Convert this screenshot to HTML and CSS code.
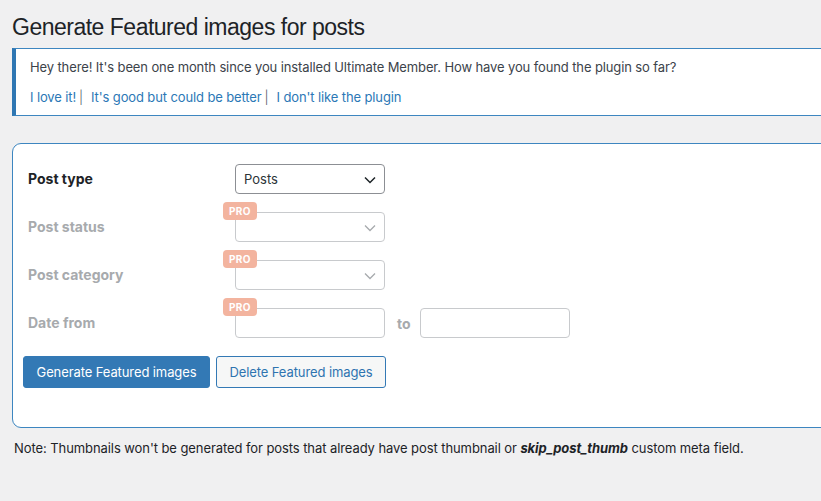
FILE: index.html
```html
<!DOCTYPE html>
<html>
<head>
<meta charset="utf-8">
<link rel="stylesheet" href="styles.css">
</head>
<body>
<div class="wrap">
  <h1 class="title">Generate Featured images for posts</h1>
  <div class="notice">
    <p>Hey there! It's been one month since you installed Ultimate Member. How have you found the plugin so far?</p>
    <p class="links"><a href="#">I love it!</a><span class="sep">|</span><a href="#">It's good but could be better</a><span class="sep">|</span><a href="#">I don't like the plugin</a></p>
  </div>
  <div class="card">
    <div class="row">
      <div class="label">Post type</div>
      <div class="field">
        <div class="select">Posts<svg class="chev" viewBox="0 0 12 8" width="12" height="8"><path d="M1 1.5 L6 6.5 L11 1.5" fill="none" stroke="#1d2327" stroke-width="1.5"/></svg></div>
      </div>
    </div>
    <div class="row disabled">
      <div class="label">Post status</div>
      <div class="field">
        <span class="pro">PRO</span>
        <div class="select"><svg class="chev" viewBox="0 0 12 8" width="12" height="8"><path d="M1 1.5 L6 6.5 L11 1.5" fill="none" stroke="#a7aaad" stroke-width="1.3"/></svg></div>
      </div>
    </div>
    <div class="row disabled">
      <div class="label">Post category</div>
      <div class="field">
        <span class="pro">PRO</span>
        <div class="select"><svg class="chev" viewBox="0 0 12 8" width="12" height="8"><path d="M1 1.5 L6 6.5 L11 1.5" fill="none" stroke="#a7aaad" stroke-width="1.3"/></svg></div>
      </div>
    </div>
    <div class="row disabled">
      <div class="label">Date from</div>
      <div class="field">
        <span class="pro">PRO</span>
        <div class="input"></div>
      </div>
      <span class="to">to</span>
      <div class="input"></div>
    </div>
    <div class="actions">
      <button class="btn primary">Generate Featured images</button>
      <button class="btn secondary">Delete Featured images</button>
    </div>
  </div>
  <p class="note">Note: Thumbnails won't be generated for posts that already have post thumbnail or <strong><em>skip_post_thumb</em></strong> custom meta field.</p>
</div>
</body>
</html>
```

FILE: styles.css
```css
html, body {
  margin: 0;
  padding: 0;
  overflow: hidden;
}
body {
  background: #f0f0f1;
  font-family: Inter, "Liberation Sans", Arial, sans-serif;
  font-size: 13px;
  color: #3c434a;
}
.wrap {
  width: 850px;
  padding-left: 12px;
}
.title {
  font-family: "Liberation Sans", Arial, sans-serif;
  font-size: 23px;
  font-weight: 400;
  line-height: 29px;
  letter-spacing: -0.5px;
  margin: 13px 0 6px;
  color: #1d2327;
}
.notice {
  background: #fff;
  border: 1px solid #3d86c0;
  border-left: 4px solid #2f77b3;
  padding: 1px 12px 0 14px;
  letter-spacing: -0.12px;
}
.notice p {
  margin: 6px 0;
  padding: 2px 0;
  line-height: 19.5px;
}
.notice a {
  color: #2b78b6;
  text-decoration: none;
}
.links .sep {
  margin: 0 8px 0 3px;
  color: #50575e;
  font-weight: 300;
}
.card {
  margin-top: 27px;
  background: #fff;
  border: 1px solid #3d86c0;
  border-radius: 9px;
  padding: 20px 10px 39px;
}
.row {
  display: flex;
  align-items: center;
  height: 30px;
  margin-bottom: 18px;
}
.label {
  width: 207px;
  padding-left: 5px;
  padding-bottom: 2px;
  font-size: 14px;
  font-weight: 700;
  color: #1d2327;
}
.disabled .label, .to {
  color: #a7aaad;
}
.field {
  position: relative;
}
.select, .input {
  box-sizing: border-box;
  width: 150px;
  height: 30px;
  border: 1px solid #8c8f94;
  border-radius: 4px;
  background: #fff;
  display: flex;
  align-items: center;
  padding-left: 8px;
  color: #2c3338;
  font-size: 13px;
  position: relative;
}
.disabled .select, .disabled .input {
  border-color: #c8cacd;
}
.chev {
  position: absolute;
  right: 8px;
  top: 11px;
}
.pro {
  position: absolute;
  left: -12px;
  top: -10px;
  z-index: 1;
  background: #f3b49f;
  color: #fff;
  font-size: 10px;
  font-weight: 700;
  line-height: 18px;
  padding: 0 6px;
  border-radius: 4px;
  letter-spacing: 0.3px;
}
.to {
  font-size: 14px;
  font-weight: 700;
  margin: 0 9px 0 12px;
}
.actions {
  display: flex;
  gap: 6px;
}
.btn {
  box-sizing: border-box;
  height: 32px;
  font-family: inherit;
  font-size: 13px;
  letter-spacing: -0.1px;
  border-radius: 3px;
  padding: 0;
  white-space: nowrap;
  text-align: center;
  cursor: pointer;
}
.primary {
  width: 187px;
  background: #3379b5;
  border: 1px solid #3379b5;
  color: #fff;
}
.secondary {
  width: 170px;
  background: #f6f7f7;
  border: 1px solid #3379b5;
  color: #2e74b0;
}
.note {
  margin: 12px 0 0 2px;
  color: #1d2327;
  font-size: 13px;
  line-height: 16px;
  letter-spacing: -0.08px;
}
.note strong {
  font-weight: 700;
}
```
